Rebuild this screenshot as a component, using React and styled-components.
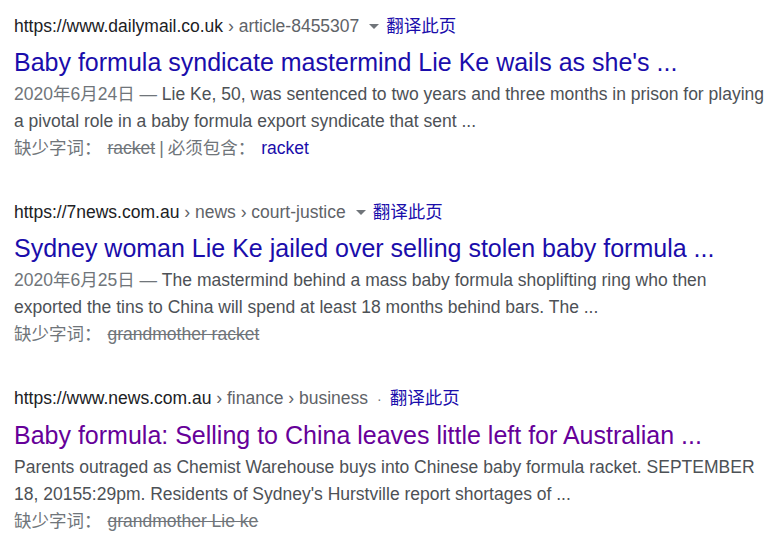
import React from "react";
import styled, { createGlobalStyle } from "styled-components";

const Global = createGlobalStyle`
  html, body { margin: 0; padding: 0; background: #fff; }
  body { font-family: Arial, "Liberation Sans", "Noto Sans CJK SC", sans-serif; }
`;

const Page = styled.div`
  padding: 14px 0 0 14px;
  display: flex;
  flex-direction: column;
  gap: 39px;
`;

const Result = styled.div`
  display: flex;
  flex-direction: column;
`;

const CiteRow = styled.div`
  font-size: 17.5px;
  line-height: 22.5px;
  white-space: nowrap;
`;

const Domain = styled.span`
  color: #202124;
`;

const Crumbs = styled.span`
  color: #5f6368;
`;

const Caret = styled.span`
  display: inline-block;
  width: 0;
  height: 0;
  margin: 0 7px 0 10px;
  border-left: 5px solid transparent;
  border-right: 5px solid transparent;
  border-top: 5px solid #70757a;
  vertical-align: middle;
  position: relative;
  top: -1px;
`;

const Dot = styled.span`
  color: #70757a;
  margin: 0 8px 0 9px;
  font-size: 14px;
`;

const Translate = styled.a`
  color: #1a0dab;
  text-decoration: none;
  font-family: "Noto Sans CJK SC", sans-serif;
  font-size: 17.5px;
`;

const Title = styled.a`
  display: block;
  margin-top: 8px;
  font-size: 25px;
  line-height: 32.5px;
  color: ${p => (p.$visited ? "#660099" : "#1a0dab")};
  text-decoration: none;
  white-space: nowrap;
`;

const Snippet = styled.div`
  margin-top: 3px;
  font-size: 17.5px;
  line-height: 26.5px;
  color: #4d5156;
`;

const DateText = styled.span`
  color: #70757a;
`;

const Missing = styled.div`
  font-size: 17.5px;
  line-height: 26px;
  color: #70757a;
`;

const Cjk = styled.span`
  font-family: "Noto Sans CJK SC", sans-serif;
`;

const Struck = styled.s`
  color: #70757a;
  margin-left: 6px;
`;

const Pipe = styled.span`
  margin: 0 4px;
`;

const MustLink = styled.a`
  color: #1a0dab;
  text-decoration: none;
  margin-left: 6px;
`;

const results = [
  {
    domain: "https://www.dailymail.co.uk",
    crumbs: " › article-8455307",
    sep: "caret",
    title: "Baby formula syndicate mastermind Lie Ke wails as she's ...",
    date: "2020年6月24日 — ",
    body: "Lie Ke, 50, was sentenced to two years and three months in prison for playing a pivotal role in a baby formula export syndicate that sent ...",
    missing: "racket",
    must: "racket",
  },
  {
    domain: "https://7news.com.au",
    crumbs: " › news › court-justice",
    sep: "caret",
    title: "Sydney woman Lie Ke jailed over selling stolen baby formula ...",
    date: "2020年6月25日 — ",
    body: "The mastermind behind a mass baby formula shoplifting ring who then exported the tins to China will spend at least 18 months behind bars. The ...",
    missing: "grandmother racket",
  },
  {
    domain: "https://www.news.com.au",
    crumbs: " › finance › business",
    sep: "dot",
    visited: true,
    title: "Baby formula: Selling to China leaves little left for Australian ...",
    body: "Parents outraged as Chemist Warehouse buys into Chinese baby formula racket. SEPTEMBER 18, 20155:29pm. Residents of Sydney's Hurstville report shortages of ...",
    missing: "grandmother Lie ke",
  },
];

export default function App() {
  return (
    <>
      <Global />
      <Page>
        {results.map((r, i) => (
          <Result key={i}>
            <CiteRow>
              <Domain>{r.domain}</Domain>
              <Crumbs>{r.crumbs}</Crumbs>
              {r.sep === "caret" ? <Caret /> : <Dot>·</Dot>}
              <Translate href="#">翻译此页</Translate>
            </CiteRow>
            <Title href="#" $visited={r.visited}>{r.title}</Title>
            <Snippet>
              {r.date && <DateText>{r.date}</DateText>}
              {r.body}
            </Snippet>
            <Missing>
              <Cjk>缺少字词：</Cjk>
              <Struck>{r.missing}</Struck>
              {r.must && (
                <>
                  <Pipe>|</Pipe>
                  <Cjk>必须包含：</Cjk>
                  <MustLink href="#">{r.must}</MustLink>
                </>
              )}
            </Missing>
          </Result>
        ))}
      </Page>
    </>
  );
}
